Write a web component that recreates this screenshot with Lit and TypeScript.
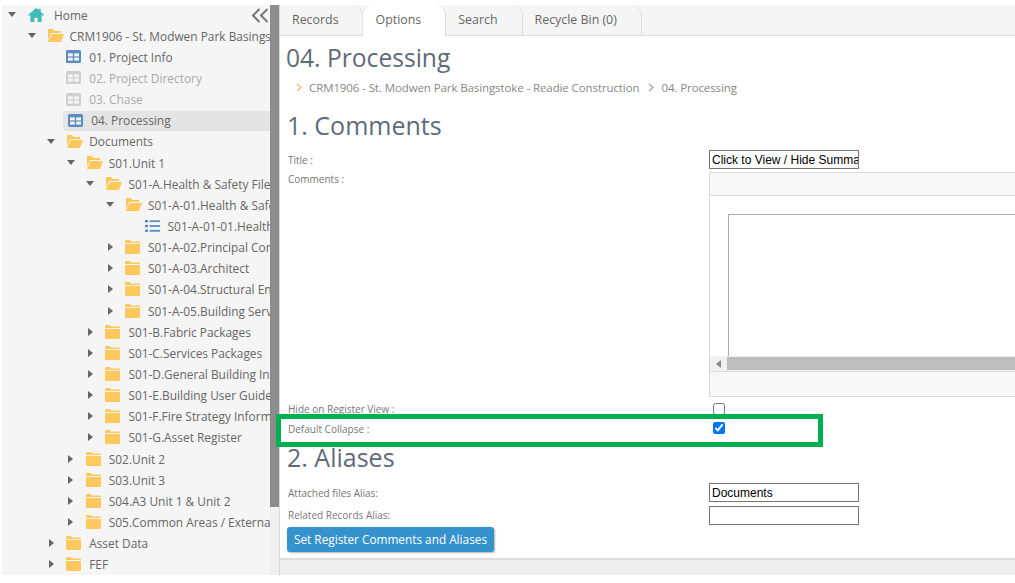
import { LitElement, html, css, svg } from "lit";
import { customElement } from "lit/decorators.js";

type Row = { l: number; t: string; i: string; a?: "d" | "r"; dis?: boolean; sel?: boolean };

const rows: Row[] = [
  { l: 0, t: "Home", i: "home", a: "d" },
  { l: 1, t: "CRM1906 - St. Modwen Park Basingstoke - Readie Construction", i: "open", a: "d" },
  { l: 2, t: "01. Project Info", i: "table" },
  { l: 2, t: "02. Project Directory", i: "table", dis: true },
  { l: 2, t: "03. Chase", i: "table", dis: true },
  { l: 2, t: "04. Processing", i: "table", sel: true },
  { l: 2, t: "Documents", i: "open", a: "d" },
  { l: 3, t: "S01.Unit 1", i: "open", a: "d" },
  { l: 4, t: "S01-A.Health & Safety File", i: "open", a: "d" },
  { l: 5, t: "S01-A-01.Health & Safety", i: "open", a: "d" },
  { l: 6, t: "S01-A-01-01.Health & Safety", i: "list" },
  { l: 5, t: "S01-A-02.Principal Contractor", i: "closed", a: "r" },
  { l: 5, t: "S01-A-03.Architect", i: "closed", a: "r" },
  { l: 5, t: "S01-A-04.Structural Engineer", i: "closed", a: "r" },
  { l: 5, t: "S01-A-05.Building Services", i: "closed", a: "r" },
  { l: 4, t: "S01-B.Fabric Packages", i: "closed", a: "r" },
  { l: 4, t: "S01-C.Services Packages", i: "closed", a: "r" },
  { l: 4, t: "S01-D.General Building Information", i: "closed", a: "r" },
  { l: 4, t: "S01-E.Building User Guide", i: "closed", a: "r" },
  { l: 4, t: "S01-F.Fire Strategy Information", i: "closed", a: "r" },
  { l: 4, t: "S01-G.Asset Register", i: "closed", a: "r" },
  { l: 3, t: "S02.Unit 2", i: "closed", a: "r" },
  { l: 3, t: "S03.Unit 3", i: "closed", a: "r" },
  { l: 3, t: "S04.A3 Unit 1 & Unit 2", i: "closed", a: "r" },
  { l: 3, t: "S05.Common Areas / External", i: "closed", a: "r" },
  { l: 2, t: "Asset Data", i: "closed", a: "r" },
  { l: 2, t: "FEF", i: "closed", a: "r" },
];

const icon = (k: string, dis?: boolean) => {
  if (k === "home")
    return svg`<svg class="ic" width="16" height="14" viewBox="0 0 17 15"><path fill="#3cbcb4" d="M8.5 0 0 7.6l.9 1L2.5 7.2V15h4.3v-4.6h3.4V15h4.3V7.2l1.6 1.4 .9-1L13.5 4V.8h-2v1.4z"/></svg>`;
  if (k === "open")
    return svg`<svg class="ic" width="17" height="13" viewBox="0 0 17 13"><path fill="#ffc85c" d="M1 0h5l1.5 2H14v2H4.2L1 11V0z"/><path fill="#ffc85c" d="M4.8 5H17l-3 8H.8z"/></svg>`;
  if (k === "closed")
    return svg`<svg class="ic" width="15" height="14" viewBox="0 0 15 14"><path fill="#ffc85c" d="M0 1.5C0 .7.5 0 1.2 0h3.6L6 1.5h8c.6 0 1 .5 1 1V3H0z"/><path fill="#ffc85c" d="M0 4h15v9c0 .6-.4 1-1 1H1c-.6 0-1-.4-1-1z"/></svg>`;
  if (k === "list")
    return svg`<svg class="ic" width="15" height="12" viewBox="0 0 15 12"><g fill="#5b8bbf"><rect width="3" height="2.4"/><rect y="4.8" width="3" height="2.4"/><rect y="9.6" width="3" height="2.4"/><rect x="4.6" y=".3" width="10.4" height="1.8"/><rect x="4.6" y="5.1" width="10.4" height="1.8"/><rect x="4.6" y="9.9" width="10.4" height="1.8"/></g></svg>`;
  const c = dis ? "#cfcfcf" : "#5b8bbf";
  return svg`<svg class="ic" width="15" height="13" viewBox="0 0 15 13"><rect width="15" height="13" rx="1.5" fill="${c}"/><g fill="#f5f5f5"><rect x="2" y="3.4" width="4.8" height="3"/><rect x="8.2" y="3.4" width="4.8" height="3"/><rect x="2" y="7.6" width="4.8" height="3"/><rect x="8.2" y="7.6" width="4.8" height="3"/></g></svg>`;
};

const arrow = (a?: "d" | "r") =>
  a === "d"
    ? svg`<svg class="ar" width="8" height="5" viewBox="0 0 8 5"><path fill="#666" d="M0 0h8L4 5z"/></svg>`
    : a === "r"
      ? svg`<svg class="ar" width="5" height="8" viewBox="0 0 5 8"><path fill="#666" d="M0 0l5 4-5 4z"/></svg>`
      : null;

@customElement("app-root")
export class AppRoot extends LitElement {
  static styles = css`
    :host { display: block; width: 1015px; height: 583px; background: #fff; overflow: hidden; font-family: "Open Sans", sans-serif; color: #666; }
    .frame { display: flex; height: 570px; margin: 5px 0 0 2px; }
    .side { position: relative; width: 268px; flex: none; background: #f5f5f5; overflow: hidden; }
    .row { display: flex; align-items: center; height: 21.15px; white-space: nowrap; font-size: 11.9px; position: relative; }
    .row:first-child { margin-top: -1px; }
    .row.sel::before { content: ""; position: absolute; left: 61px; right: 0; top: 1px; bottom: 0; background: #e4e4e4; border-radius: 3px 0 0 3px; }
    .row > * { position: relative; }
    .row.dis { color: #aaa; }
    .arw { width: 16px; flex: none; display: flex; justify-content: center; align-items: center; margin-right: 7px; }
    .icw { flex: none; display: flex; width: 23px; }
    .icw.home { width: 26px; padding-left: 1px; }
    .row.sel .icw { margin-left: 2px; }
    .ic { display: block; }
    .collapse { position: absolute; top: 3px; right: 1px; }
    .track { width: 9px; flex: none; background: #f0f0f0; }
    .thumb { height: 502px; background: #8c8c8c; }
    .main { flex: 1; min-width: 0; display: flex; flex-direction: column; border-left: 1px solid #d8d8d8; background: #eee; position: relative; }
    .tabs { display: flex; height: 31px; flex: none; background: #f5f5f5; border-bottom: 1px solid #ddd; box-sizing: border-box; }
    .tab { font-size: 12.4px; line-height: 30px; padding: 0 24px 0 12px; border-right: 1px solid #ddd; border-radius: 0 10px 0 0; }
    .tab:first-child { padding: 0 23px 0 12px; }
    .tab.on { background: #fff; height: 31px; border-radius: 10px 10px 0 0; padding: 0 24px 0 13px; border-left: 1px solid #e4e4e4; margin-left: -1px; }
    .body { height: 524px; flex: none; background: #fff; border-bottom: 2px solid #ddd; box-sizing: border-box; padding: 0 0 0 7px; overflow: hidden; }
    h1 { margin: 4px 0 0 -1px; font-size: 24.6px; line-height: 36px; font-weight: 400; color: #5f6b78; }
    .crumb { display: flex; align-items: center; font-size: 11.5px; height: 20px; margin: 1px 0 0 9px; color: #888; letter-spacing: -0.1px; }
    .crumb svg { margin-right: 7px; }
    .crumb span { margin-right: 9px; }
    h2 { margin: 0; font-size: 25px; line-height: 34px; font-weight: 400; color: #5f6b78; }
    h2.a { margin-top: 11px; }
    h2.b { margin-top: 1px; }
    .grid { display: grid; grid-template-columns: 422px 1fr; font-size: 10px; color: #777; }
    .grid.first { margin-top: 8px; }
    .grid.second { margin-top: 9px; }
    .cell { display: flex; align-items: center; }
    .lab { padding-left: 1px; }
    .top { padding-top: 3px; }
    .edc { padding-top: 3px; }
    .h1r { height: 20px; padding-top: 2px; }
    .h2r { height: 20px; }
    .alias { height: 19px; }
    .alias2 { height: 19px; margin-top: 4px; }
    .lab.alias2 { height: 17px; }
    input[type="text"] { box-sizing: border-box; width: 150px; height: 19px; border: 1px solid #767676; padding: 0 0 0 2px; margin: 0; font: 12px "Liberation Sans", sans-serif; color: #000; outline: none; border-radius: 0; background: #fff; }
    input[type="checkbox"] { margin: 0 0 0 4px; width: 12px; height: 12px; }
    .ck2 { margin-top: -2px !important; }
    .editor { width: 400px; height: 225px; box-sizing: border-box; border: 1px solid #d9d9d9; border-right: 0; display: flex; flex-direction: column; background: #fff; }
    .tb { height: 22px; flex: none; background: #f8f8f8; border-bottom: 1px solid #d9d9d9; }
    .ed { flex: 1; padding: 18px 0 0 18px; box-sizing: border-box; min-height: 0; }
    .area { height: 143px; border: 1px solid #aaa; border-bottom: 0; border-right: 0; box-sizing: border-box; }
    .scroll { height: 15px; background: #f1f1f1; display: flex; align-items: center; flex: none; }
    .scroll svg { margin: 0 6px; flex: none; }
    .scroll i { display: block; flex: 1; height: 13px; background: #bdbdbd; }
    .ft { height: 24px; flex: none; background: #f8f8f8; border-top: 1px solid #d9d9d9; }
    .btn { display: block; margin: 2px 0 0 0; width: 207px; height: 25px; padding: 0 0 2px; font: 11.8px/22px "Open Sans", sans-serif; color: #fff; background: #3592cd; border: 0; border-radius: 3px; box-shadow: 1px 1px 2px rgba(0,0,0,.3); }
    .hl { position: absolute; left: -4px; top: 409px; width: 547px; height: 33px; border: 5px solid #00b050; box-sizing: border-box; pointer-events: none; }
  `;

  render() {
    return html`<div class="frame">
      <aside class="side">
        ${rows.map(
          (r) => html`<div class="row ${r.dis ? "dis" : ""} ${r.sel ? "sel" : ""}" style="padding-left:${2 + r.l * 19.6}px">
            <span class="arw">${arrow(r.a)}</span>
            <span class="icw ${r.i === "home" ? "home" : ""}">${icon(r.i, r.dis)}</span>
            <span class="lbl">${r.t}</span>
          </div>`,
        )}
        <svg class="collapse" width="18" height="15" viewBox="0 0 18 15" fill="none" stroke="#777" stroke-width="2"><path d="M8.500 1 2 7.500 8.500 14M16.500 1 10 7.500l6.500 6.500"/></svg>
      </aside>
      <div class="track"><div class="thumb"></div></div>
      <section class="main">
        <nav class="tabs">
          <div class="tab">Records</div>
          <div class="tab on">Options</div>
          <div class="tab">Search</div>
          <div class="tab">Recycle Bin (0)</div>
        </nav>
        <div class="body">
          <h1>04. Processing</h1>
          <div class="crumb">
            <svg width="6" height="9" viewBox="0 0 6 9" fill="none" stroke="#f5b963" stroke-width="1.2"><path d="M1 1l4 3.500L1 8"/></svg>
            <span>CRM1906 - St. Modwen Park Basingstoke - Readie Construction</span>
            <svg width="6" height="9" viewBox="0 0 6 9" fill="none" stroke="#8aa0b5" stroke-width="1.2"><path d="M1 1l4 3.500L1 8"/></svg>
            <span>04. Processing</span>
          </div>
          <h2 class="a">1. Comments</h2>
          <div class="grid first">
            <div class="cell lab">Title :</div>
            <div class="cell"><input type="text" .value=${"Click to View / Hide Summary"} /></div>
            <div class="lab top">Comments :</div>
            <div class="edc">
              <div class="editor">
                <div class="tb"></div>
                <div class="ed"><div class="area"></div></div>
                <div class="scroll"><svg width="5" height="8" viewBox="0 0 5 8"><path fill="#888" d="M5 0 0 4l5 4z"/></svg><i></i></div>
                <div class="ft"></div>
              </div>
            </div>
            <div class="cell lab h1r">Hide on Register View :</div>
            <div class="cell h1r"><input type="checkbox" /></div>
            <div class="cell lab h2r">Default Collapse :</div>
            <div class="cell h2r"><input class="ck2" type="checkbox" checked /></div>
          </div>
          <h2 class="b">2. Aliases</h2>
          <div class="grid second">
            <div class="cell lab alias">Attached files Alias:</div>
            <div class="cell"><input type="text" .value=${"Documents"} /></div>
            <div class="cell lab alias2">Related Records Alias:</div>
            <div class="cell alias2"><input type="text" /></div>
          </div>
          <button class="btn">Set Register Comments and Aliases</button>
        </div>
        <div class="hl"></div>
      </section>
    </div>`;
  }
}
